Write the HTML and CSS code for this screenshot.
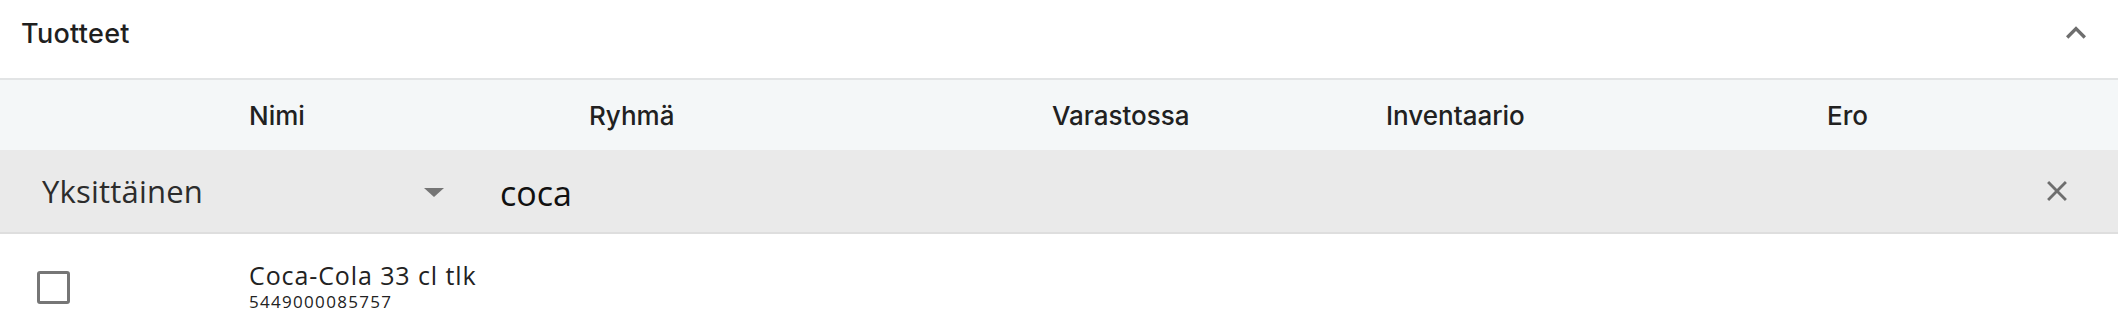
FILE: index.html
```html
<!DOCTYPE html>
<html lang="fi">
<head>
<meta charset="utf-8">
<title>Tuotteet</title>
<link rel="stylesheet" href="styles.css">
</head>
<body>
<section class="panel">
  <header class="panel-header">
    <span class="panel-title">Tuotteet</span>
    <svg class="chevron" viewBox="0 0 24 24" aria-hidden="true"><path d="M12 8l-6 6 1.41 1.41L12 10.83l4.59 4.58L18 14z"/></svg>
  </header>
  <div class="table">
    <div class="grid head">
      <div></div>
      <div class="th">Nimi</div>
      <div class="th">Ryhmä</div>
      <div class="th">Varastossa</div>
      <div class="th">Inventaario</div>
      <div class="th">Ero</div>
    </div>
    <div class="filter">
      <div class="select">
        <span class="select-value">Yksittäinen</span>
        <span class="select-arrow"></span>
      </div>
      <div class="search">
        <span class="query">coca</span>
        <svg class="close" viewBox="0 0 24 24" aria-hidden="true"><path d="M19 6.41L17.59 5 12 10.59 6.41 5 5 6.41 10.59 12 5 17.59 6.41 19 12 13.41 17.59 19 19 17.59 13.41 12z"/></svg>
      </div>
    </div>
    <div class="grid item">
      <div class="cell-check"><span class="checkbox"></span></div>
      <div class="product">
        <div class="product-name">Coca-Cola 33 cl tlk</div>
        <div class="product-code">5449000085757</div>
      </div>
      <div></div>
      <div></div>
      <div></div>
      <div></div>
    </div>
  </div>
</section>
</body>
</html>
```
FILE: styles.css
```css
html, body {
  margin: 0;
  padding: 0;
  background: #ffffff;
}

body {
  font-family: "Open Sans", "Noto Sans", sans-serif;
  color: #212121;
}

.panel-header {
  height: 66px;
  padding: 0 22px 12px 21px;
  display: flex;
  align-items: center;
  justify-content: space-between;
  border-bottom: 2px solid #e2e4e5;
}

.panel-title {
  font-family: "Inter", "Open Sans", sans-serif;
  font-size: 27px;
  font-weight: 500;
  letter-spacing: 0.3px;
  color: #1f1f1f;
}

.chevron {
  width: 40px;
  height: 40px;
  fill: #6e6e6e;
}

.grid {
  display: grid;
  grid-template-columns: 249px 340px 463px 334px 441px 1fr;
  align-items: center;
}

.head {
  height: 70px;
  background: #f4f7f8;
}

.th {
  font-family: "Inter", "Open Sans", sans-serif;
  font-size: 26px;
  font-weight: 500;
  color: #212121;
}

.filter {
  height: 82px;
  display: flex;
  align-items: center;
  background: #eaeaea;
  border-bottom: 2px solid #dedede;
}

.select {
  width: 402px;
  padding: 0 26px 0 42px;
  display: flex;
  align-items: center;
  justify-content: space-between;
}

.select-value {
  font-size: 31px;
  letter-spacing: 0.2px;
  color: #2c2c2c;
}

.select-arrow {
  width: 0;
  height: 0;
  border-left: 10px solid transparent;
  border-right: 10px solid transparent;
  border-top: 9px solid #757575;
  margin-top: 3px;
}

.search {
  flex: 1;
  display: flex;
  align-items: center;
  justify-content: space-between;
  padding: 0 44px 0 30px;
}

.query {
  font-size: 34px;
  color: #111111;
  padding-top: 4px;
}

.close {
  width: 34px;
  height: 34px;
  fill: #6e6e6e;
}

.item {
  height: 104px;
  background: #ffffff;
}

.cell-check {
  padding-left: 37px;
  display: flex;
  align-items: center;
}

.checkbox {
  width: 27px;
  height: 27px;
  border: 3px solid #767676;
  border-radius: 3px;
  margin-top: 2px;
}

.product {
  display: flex;
  flex-direction: column;
  padding-top: 1px;
}

.product-name {
  font-size: 25px;
  line-height: 31px;
  letter-spacing: 0.9px;
  color: #222222;
}

.product-code {
  font-size: 17px;
  line-height: 22px;
  letter-spacing: 1.3px;
  color: #222222;
}
```
